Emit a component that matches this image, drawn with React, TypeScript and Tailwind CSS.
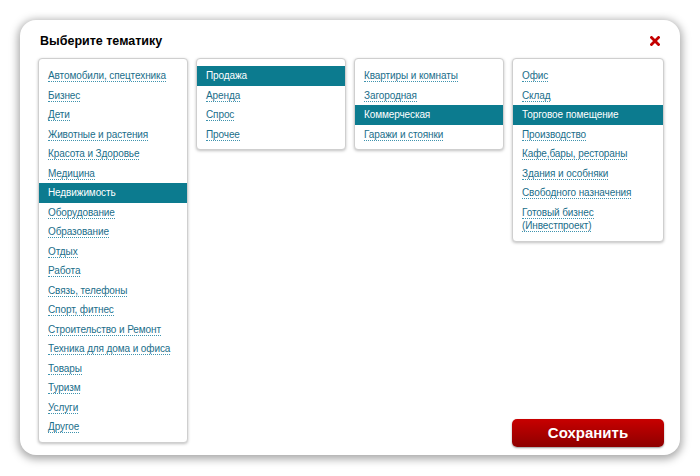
import React, { useState } from 'react';

const col1 = [
  'Автомобили, спецтехника',
  'Бизнес',
  'Дети',
  'Животные и растения',
  'Красота и Здоровье',
  'Медицина',
  'Недвижимость',
  'Оборудование',
  'Образование',
  'Отдых',
  'Работа',
  'Связь, телефоны',
  'Спорт, фитнес',
  'Строительство и Ремонт',
  'Техника для дома и офиса',
  'Товары',
  'Туризм',
  'Услуги',
  'Другое',
];
const col2 = ['Продажа', 'Аренда', 'Спрос', 'Прочее'];
const col3 = ['Квартиры и комнаты', 'Загородная', 'Коммерческая', 'Гаражи и стоянки'];
const col4 = [
  'Офис',
  'Склад',
  'Торговое помещение',
  'Производство',
  'Кафе,бары, рестораны',
  'Здания и особняки',
  'Свободного назначения',
  'Готовый бизнес (Инвестпроект)',
];

interface ColumnProps {
  items: string[];
  active: string;
  onPick: (v: string) => void;
  wide?: boolean;
}

const Column: React.FC<ColumnProps> = ({ items, active, onPick, wide }) => (
  <div
    className={`${wide ? 'w-[152px]' : 'w-[150px]'} self-start rounded-[4px] border border-[#cfcfcf] bg-white pt-[7px] pb-[5px] shadow-[0_1px_3px_rgba(0,0,0,0.25)]`}
  >
    {items.map((it) => (
      <div
        key={it}
        onClick={() => onPick(it)}
        className={`cursor-pointer py-[3px] pl-[9px] pr-[20px] leading-[13.5px] ${
          it === active ? 'bg-[#0c7b8f] text-white' : 'text-[#1a6e8a]'
        }`}
      >
        {it === active ? (
          <span>{it}</span>
        ) : (
          <span className="border-b border-dotted border-[#3f93ad]">{it}</span>
        )}
      </div>
    ))}
  </div>
);

export default function App() {
  const [a, setA] = useState('Недвижимость');
  const [b, setB] = useState('Продажа');
  const [c, setC] = useState('Коммерческая');
  const [d, setD] = useState('Торговое помещение');

  return (
    <div
      className="h-[476px] w-[700px] bg-white p-[20px]"
      style={{ fontFamily: '"Liberation Sans", Arial, sans-serif' }}
    >
      <div className="flex h-[435px] w-[660px] flex-col rounded-[16px] bg-white pb-[8px] pl-[18px] pr-[16px] pt-[10px] shadow-[0_2px_8px_2px_rgba(0,0,0,0.35)]">
        <div className="mb-[6px] flex h-[22px] items-center justify-between pl-[2px]">
          <h1 className="text-[12.5px] font-bold text-black">Выберите тематику</h1>
          <svg width="10" height="10" viewBox="0 0 10 10" className="mr-[4px]">
            <path d="M1.5 1.5 L8.5 8.5 M8.5 1.5 L1.5 8.5" stroke="#c40000" strokeWidth="2.8" strokeLinecap="square" />
          </svg>
        </div>
        <div className="flex flex-1 gap-[8px] whitespace-nowrap text-[10px] tracking-[-0.1px]">
          <Column items={col1} active={a} onPick={setA} />
          <Column items={col2} active={b} onPick={setB} />
          <Column items={col3} active={c} onPick={setC} />
          <div className="flex flex-col justify-between">
            <div className="whitespace-normal">
              <Column items={col4} active={d} onPick={setD} wide />
            </div>
            <button className="h-[28px] w-[152px] rounded-[5px] bg-gradient-to-b from-[#c80000] to-[#8e0000] text-[15px] font-bold tracking-normal text-white shadow-[0_1px_2px_rgba(0,0,0,0.4)]">
              Сохранить
            </button>
          </div>
        </div>
      </div>
    </div>
  );
}
